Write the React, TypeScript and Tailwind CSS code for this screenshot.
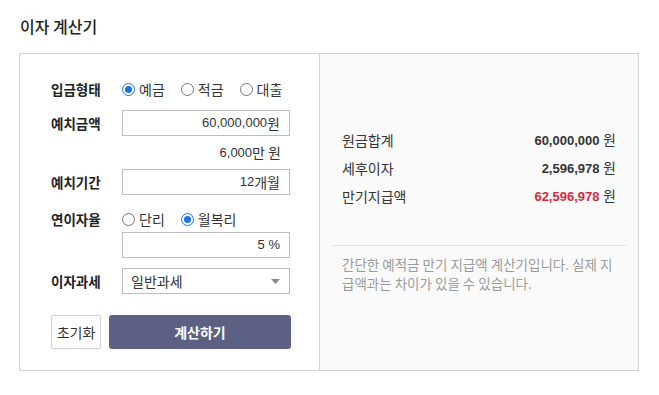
import React from "react";

const KR = '"Noto Sans CJK KR", "Noto Sans", sans-serif';
const NUM = '"Liberation Sans", "Noto Sans CJK KR", sans-serif';

function Radio({ checked, label }: { checked?: boolean; label: string }) {
  return (
    <span className="flex items-center mr-[16px]">
      {checked ? (
        <span className="w-[13px] h-[13px] rounded-full border border-[#1a73e8] flex items-center justify-center bg-white">
          <span className="w-[7px] h-[7px] rounded-full bg-[#1a73e8]" />
        </span>
      ) : (
        <span className="w-[13px] h-[13px] rounded-full border border-[#767676] bg-white" />
      )}
      <span className="ml-[4px] text-[14px] text-[#333]">{label}</span>
    </span>
  );
}

function Label({ children }: { children: React.ReactNode }) {
  return <div className="w-[71px] shrink-0 text-[13.5px] font-bold text-[#222]">{children}</div>;
}

function Input({ value }: { value: React.ReactNode }) {
  return (
    <div className="w-[168px] h-[26px] border border-[#bdbdbd] bg-white flex items-center justify-end pr-[9px] text-[13px] text-[#333]" style={{ fontFamily: NUM }}>
      {value}
    </div>
  );
}

export default function App() {
  return (
    <div className="w-[659px] h-[395px] bg-white px-[19px] pt-[16px]" style={{ fontFamily: KR }}>
      <div className="h-5 leading-5 text-[16px] font-medium text-[#222] pl-[1px]">이자 계산기</div>
      <div className="mt-[17px] w-[620px] h-[318px] border border-[#d2d2d2] flex">
        {/* left */}
        <div className="w-[300px] border-r border-[#d2d2d2] pl-[31px] pt-[22px]">
          <div className="flex items-center h-[26px]">
            <Label>입금형태</Label>
            <Radio checked label="예금" />
            <Radio label="적금" />
            <Radio label="대출" />
          </div>
          <div className="flex items-center mt-[8px]">
            <Label>예치금액</Label>
            <Input value={<>60,000,000<span className="text-[14px]" style={{ fontFamily: KR }}>원</span></>} />
          </div>
          <div className="flex items-center justify-end h-[33px] w-[239px] pr-[9px] text-[13px] text-[#333]" style={{ fontFamily: NUM }}>
            6,000<span className="text-[14px]" style={{ fontFamily: KR }}>만 원</span>
          </div>
          <div className="flex items-center">
            <Label>예치기간</Label>
            <Input value={<>12<span className="text-[14px]" style={{ fontFamily: KR }}>개월</span></>} />
          </div>
          <div className="flex items-center h-[26px] mt-[11px]">
            <Label>연이자율</Label>
            <Radio label="단리" />
            <Radio checked label="월복리" />
          </div>
          <div className="flex items-center">
            <div className="w-[71px] shrink-0" />
            <Input value="5 %" />
          </div>
          <div className="flex items-center mt-[10px]">
            <Label>이자과세</Label>
            <div className="w-[168px] h-[26px] border border-[#bdbdbd] bg-white flex items-center justify-between pl-[8px] pr-[9px] text-[14px] text-[#333]">
              <span>일반과세</span>
              <svg width="9" height="5" viewBox="0 0 9 5">
                <path d="M0 0 H9 L4.5 5 Z" fill="#888" />
              </svg>
            </div>
          </div>
          <div className="flex mt-[21px]">
            <div className="w-[50px] h-[34px] border border-[#cfcfcf] rounded-[2px] bg-white flex items-center justify-center text-[14px] text-[#333]">
              초기화
            </div>
            <div className="ml-[8px] w-[182px] h-[34px] rounded-[3px] bg-[#5c6184] flex items-center justify-center text-[14px] font-bold text-white">
              계산하기
            </div>
          </div>
        </div>
        {/* right */}
        <div className="flex-1 bg-[#fafafa] pt-[72px]">
          <div className="px-[22px]">
            <div className="flex items-center justify-between h-[28px] text-[14px] text-[#333]">
              <span>원금합계</span>
              <span className="text-[13px]" style={{ fontFamily: NUM }}>
                <b className="font-bold">60,000,000</b> <span className="text-[14px]" style={{ fontFamily: KR }}>원</span>
              </span>
            </div>
            <div className="flex items-center justify-between h-[28px] text-[14px] text-[#333]">
              <span>세후이자</span>
              <span className="text-[13px]" style={{ fontFamily: NUM }}>
                <b className="font-bold">2,596,978</b> <span className="text-[14px]" style={{ fontFamily: KR }}>원</span>
              </span>
            </div>
            <div className="flex items-center justify-between h-[28px] text-[14px] text-[#333]">
              <span>만기지급액</span>
              <span className="text-[13px]" style={{ fontFamily: NUM }}>
                <b className="font-bold text-[#d52a3c]">62,596,978</b> <span className="text-[14px]" style={{ fontFamily: KR }}>원</span>
              </span>
            </div>
          </div>
          <div className="mx-[12px] mt-[35px] border-t border-[#e3e3e3]" />
          <div className="px-[22px] mt-[9px] text-[13.5px] leading-[19px] text-[#9a9a9a]">
            간단한 예적금 만기 지급액 계산기입니다. 실제 지급액과는 차이가 있을 수 있습니다.
          </div>
        </div>
      </div>
    </div>
  );
}
